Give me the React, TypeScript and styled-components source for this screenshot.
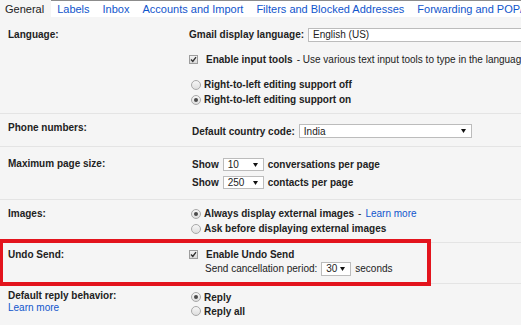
import styled, { createGlobalStyle } from "styled-components";

const GlobalStyle = createGlobalStyle`
  html, body {
    margin: 0;
    padding: 0;
    background: #f5f5f5;
    overflow: hidden;
  }
  body {
    font-family: "Liberation Sans", Arial, sans-serif;
    color: #222;
  }
`;

const Page = styled.div`
  width: 521px;
  height: 325px;
  overflow: hidden;
  background: #f5f5f5;
  font-size: 10px;
  white-space: nowrap;
`;

const TabBar = styled.div`
  display: flex;
  height: 16px;
  background: #fff;
  border-top: 1px solid #8c8c8c;
  font-size: 11px;
`;

const Tab = styled.div<{ $active?: boolean }>`
  padding: 0 7px 0 6px;
  line-height: 16px;
  color: ${(p) => (p.$active ? "#222" : "#15c")};
  background: ${(p) => (p.$active ? "#f5f5f5" : "transparent")};
  &:first-child {
    margin-left: -1px;
    margin-top: -1px;
    padding-top: 1px;
  }
`;

const Row = styled.div<{ $pt: number; $pb: number; $last?: boolean }>`
  position: relative;
  display: grid;
  grid-template-columns: 189px 1fr;
  padding: ${(p) => p.$pt}px 0 ${(p) => p.$pb}px;
  border-bottom: ${(p) => (p.$last ? "none" : "1px solid #e4e4e4")};
`;

const Label = styled.div<{ $lh?: number }>`
  padding-left: 8px;
  font-weight: bold;
  line-height: ${(p) => p.$lh ?? 15}px;
`;

const LabelLink = styled.div`
  font-weight: normal;
  color: #15c;
`;

const Value = styled.div<{ $offset?: number }>`
  display: flex;
  flex-direction: column;
  padding-top: ${(p) => p.$offset ?? 0}px;
`;

const Line = styled.div<{ $h: number; $mt?: number; $indent?: number }>`
  display: flex;
  align-items: center;
  gap: 4px;
  height: ${(p) => p.$h}px;
  margin-top: ${(p) => p.$mt ?? 0}px;
  padding-left: ${(p) => p.$indent ?? 0}px;
  font-weight: bold;
`;

const Plain = styled.span`
  font-weight: normal;
`;

const Link = styled.span`
  font-weight: normal;
  color: #15c;
`;

const SelectBox = styled.div<{ $w: number; $h?: number }>`
  display: inline-flex;
  align-items: center;
  justify-content: space-between;
  flex-shrink: 0;
  box-sizing: border-box;
  width: ${(p) => p.$w}px;
  height: ${(p) => p.$h ?? 14}px;
  padding: 0 5px 0 4px;
  border: 1px solid #bcbcbc;
  background: #fff;
  font-weight: normal;
  color: #222;
`;

const CheckBox = styled.span`
  display: inline-flex;
  align-items: center;
  justify-content: center;
  box-sizing: border-box;
  width: 9px;
  height: 9px;
  margin-right: 4px;
  border: 1px solid #9d9d9d;
  background: linear-gradient(#f3f3f3, #d9d9d9);
`;

const Radio = styled.span<{ $on?: boolean }>`
  display: inline-flex;
  align-items: center;
  justify-content: center;
  box-sizing: border-box;
  width: 10px;
  height: 10px;
  margin: 0 -1px 0 2px;
  border: 1px solid #a8a8a8;
  border-radius: 50%;
  background: linear-gradient(#f6f6f6, #dedede);
  &::after {
    content: "";
    display: ${(p) => (p.$on ? "block" : "none")};
    width: 4px;
    height: 4px;
    border-radius: 50%;
    background: #4a4a4a;
  }
`;

const Highlight = styled.div`
  position: absolute;
  left: -1px;
  top: -4px;
  bottom: -3px;
  width: 432px;
  box-sizing: border-box;
  border: 4px solid #e3141d;
  pointer-events: none;
`;

const Arrow = () => (
  <svg width="5" height="4" viewBox="0 0 5 4">
    <polygon points="0,0 5,0 2.5,4" fill="#111" />
  </svg>
);

const Check = () => (
  <svg width="7" height="7" viewBox="0 0 7 7">
    <path d="M1 3.6 L2.8 5.4 L6 1.2" stroke="#333" strokeWidth="1.4" fill="none" />
  </svg>
);

function Select({ value, width, height }: { value: string; width: number; height?: number }) {
  return (
    <SelectBox $w={width} $h={height}>
      <span>{value}</span>
      <Arrow />
    </SelectBox>
  );
}

const tabs = [
  "General",
  "Labels",
  "Inbox",
  "Accounts and Import",
  "Filters and Blocked Addresses",
  "Forwarding and POP/IMAP",
];

export default function App() {
  return (
    <Page>
      <GlobalStyle />
      <TabBar>
        {tabs.map((t, i) => (
          <Tab key={t} $active={i === 0}>
            {t}
          </Tab>
        ))}
      </TabBar>

      <Row $pt={10} $pb={6}>
        <Label>Language:</Label>
        <Value>
          <Line $h={15}>
            Gmail display language:
            <Select value="English (US)" width={260} />
          </Line>
          <Line $h={15} $mt={10}>
            <CheckBox>
              <Check />
            </CheckBox>
            Enable input tools
            <Plain>- Use various text input tools to type in the language of your choice</Plain>
          </Line>
          <Line $h={15} $mt={10}>
            <Radio />
            Right-to-left editing support off
          </Line>
          <Line $h={15}>
            <Radio $on />
            Right-to-left editing support on
          </Line>
        </Value>
      </Row>

      <Row $pt={6} $pb={8}>
        <Label>Phone numbers:</Label>
        <Value $offset={4}>
          <Line $h={14} $indent={3}>
            Default country code:
            <Select value="India" width={173} />
          </Line>
        </Value>
      </Row>

      <Row $pt={9} $pb={8}>
        <Label>Maximum page size:</Label>
        <Value>
          <Line $h={17} $indent={3}>
            Show
            <Select value="10" width={41} height={13} />
            conversations per page
          </Line>
          <Line $h={17} $mt={1} $indent={3}>
            Show
            <Select value="250" width={41} height={13} />
            contacts per page
          </Line>
        </Value>
      </Row>

      <Row $pt={6} $pb={6}>
        <Label>Images:</Label>
        <Value>
          <Line $h={15}>
            <Radio $on />
            Always display external images
            <Plain>-</Plain>
            <Link>Learn more</Link>
          </Line>
          <Line $h={15}>
            <Radio />
            Ask before displaying external images
          </Line>
        </Value>
      </Row>

      <Row $pt={5} $pb={7}>
        <Highlight />
        <Label $lh={13}>Undo Send:</Label>
        <Value>
          <Line $h={13}>
            <CheckBox>
              <Check />
            </CheckBox>
            Enable Undo Send
          </Line>
          <Line $h={15} $indent={16}>
            <Plain>Send cancellation period:</Plain>
            <Select value="30" width={30} />
            <Plain>seconds</Plain>
          </Line>
        </Value>
      </Row>

      <Row $pt={6} $pb={6} $last>
        <Label $lh={12}>
          Default reply behavior:
          <LabelLink>Learn more</LabelLink>
        </Label>
        <Value>
          <Line $h={14}>
            <Radio $on />
            Reply
          </Line>
          <Line $h={14}>
            <Radio />
            Reply all
          </Line>
        </Value>
      </Row>
    </Page>
  );
}
